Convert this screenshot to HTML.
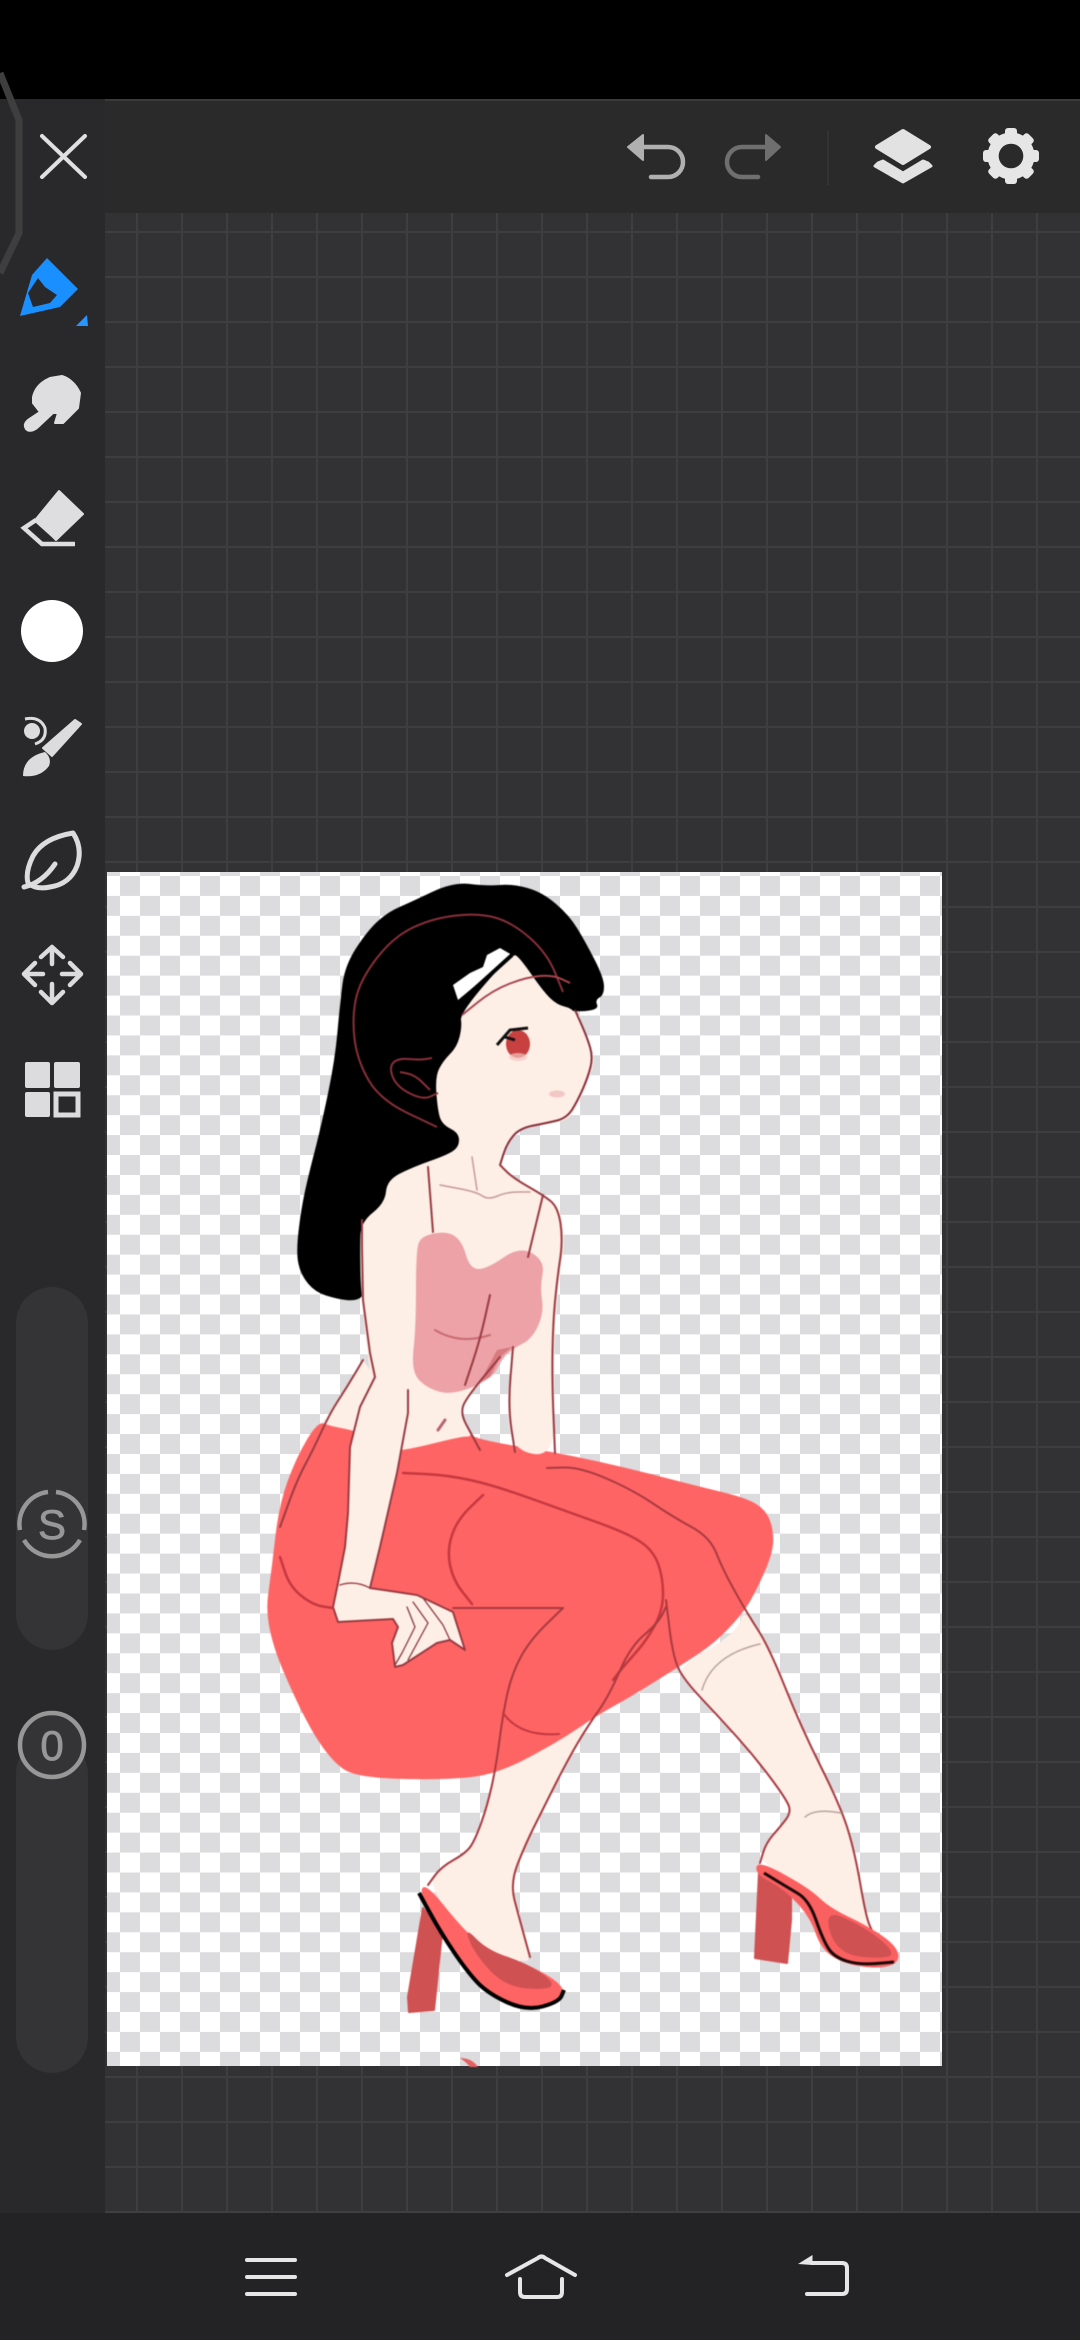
<!DOCTYPE html>
<html><head><meta charset="utf-8"><title>Canvas</title>
<style>html,body{margin:0;padding:0;background:#000;width:1080px;height:2340px;overflow:hidden}svg{display:block}</style>
</head><body>
<svg xmlns="http://www.w3.org/2000/svg" width="1080" height="2340" viewBox="0 0 1080 2340">
<defs>
<pattern id="grid" patternUnits="userSpaceOnUse" x="136" y="231" width="45" height="45"><rect width="45" height="45" fill="#323234"/><rect width="2" height="45" fill="#3e3e40"/><rect width="45" height="2" fill="#3e3e40"/></pattern>
<pattern id="chk" patternUnits="userSpaceOnUse" x="120" y="876" width="40" height="39.86"><rect width="40" height="39.86" fill="#fff"/><rect width="20" height="19.93" fill="#dcdcde"/><rect x="20" y="19.93" width="20" height="19.93" fill="#dcdcde"/></pattern>
</defs>
<rect width="1080" height="2340" fill="#000"/>
<rect x="105" y="213" width="975" height="2000" fill="url(#grid)"/>
<rect x="0" y="99" width="1080" height="114" fill="#2a2a2b"/>
<rect x="0" y="99" width="1080" height="2" fill="#3a3a3b"/>
<rect x="0" y="99" width="105" height="2114" fill="#29292b"/>
<rect x="0" y="2213" width="1080" height="127" fill="#232325"/>
<rect x="105" y="2211" width="975" height="2" fill="#3f3f41"/>
<path d="M0 73L19 120V233L0 273" fill="none" stroke="#3e3e3f" stroke-width="7"/>

<!-- paper -->
<rect x="107" y="872" width="835" height="1194" fill="url(#chk)"/>
<g style="filter:blur(.5px)">
<!-- legs -->
<path class="sm" d="M496 1767L487 1807 475 1840 466 1853 441 1867 428 1885 462 1928 487 1950 526 1963 530 1957 519 1917 510 1883 526 1843 541 1813 566 1763 594 1713 540 1700Z" fill="#fdeee6"/>
<path class="sm" d="M678 1667L737 1633 744 1607 769 1647 801 1727 841 1807 855 1853 866 1917 873 1933 830 1910 809 1890 784 1873 760 1862 766 1843 791 1813 787 1800 755 1757 719 1717 684 1680Z" fill="#fdeee6"/>
<!-- hair -->
<path class="sm" d="M296 1253L301 1210 308 1177 321 1127 335 1060 340 1003 345 965 368 930 388 912 411 902 453 882 487 886 513 884 542 892 569 915 585 941 604 978 604 995 595 1000 599 1009 580 1012 557 1009 543 1000 500 1100 470 1150 400 1210 365 1295 355 1301 337 1299 315 1292 301 1275Z" fill="#000"/>
<!-- back arm -->
<path d="M363 1360L347 1387 330 1413 318 1427 352 1440 375 1377Z" fill="#fdeee6"/>
<!-- skirt -->
<path class="sm" d="M318 1421L330 1426 352 1430 407 1447 463 1431 480 1440 547 1451 597 1461 647 1473 697 1486 747 1498 767 1511 774 1533 772 1555 757 1589 744 1612 715 1643 680 1666 632 1696 596 1716 561 1740 500 1773 451 1780 358 1778 332 1762 303 1717 264 1626 272 1566 279 1505 296 1458Z" fill="#ff6464"/>
<!-- head + torso -->
<path class="sm" d="M460 1013L512 953 520 958 543 991 557 1005 575 1009 587 1037 595 1057 590 1077 580 1100 569 1120 547 1124 520 1128 507 1143 500 1165 513 1178 543 1195 560 1207 565 1240 559 1280 555 1323 554 1380 555 1457 513 1451 506 1407 513 1347 500 1357 467 1397 458 1413 473 1437 463 1436 407 1450 380 1452 361 1300 360 1247 361 1222 385 1203 387 1180 413 1167 447 1155 459 1147 459 1133 443 1125 438 1113 435 1077 443 1061 457 1047 462 1027Z" fill="#fdeee6"/>
<!-- arm + hand -->
<path d="M363 1290L370 1353 375 1377 360 1407 350 1447 348 1513 345 1547 338 1583 333 1607 338 1622 393 1619 398 1627 392 1643 395 1667 403 1665 437 1643 450 1640 465 1650 453 1612 417 1595 370 1588 380 1547 397 1473 408 1413 415 1300Z" fill="#fdeee6"/>
<!-- top -->
<path class="sm" d="M421 1236L447 1231 462 1241 470 1269 487 1269 520 1246 545 1261 540 1287 544 1313 532 1339 512 1349 502 1359 492 1379 453 1395 428 1389 411 1372 416 1327 416 1251Z" fill="#eca2a6"/>
<path d="M512 1347L500 1357 490 1377 480 1382 497 1350Z" fill="#d87a80"/>
<!-- bow and hair line -->
<path d="M453 985L470 973 483 967 487 955 500 948 512 955 458 1000Z" fill="#fff"/>
<path d="M459 1003L512 955" stroke="#000" stroke-width="4" fill="none"/>
<!-- red lines on hair -->
<g fill="none" stroke="#8a2f3a" stroke-width="2" stroke-linejoin="round">
<path class="sm" d="M563 992L547 953 513 923 480 913 433 918 393 937 360 980 352 1017 357 1060 380 1100 437 1127"/>
<path class="sm" d="M432 1058L420 1060 397 1058 389 1068 397 1087 423 1100 438 1093"/>
<path class="sm" d="M400 1072L415 1075 430 1090"/>
<path class="sm" d="M462 1015L493 990 527 977 553 975 570 983" stroke="#a8454e"/>
<path class="sm" d="M575 1010L587 1037 593 1057 588 1077 578 1100 567 1118 547 1123 520 1128 507 1143 500 1165"/>
</g>
<!-- face -->
<ellipse cx="518" cy="1044" rx="12" ry="14" fill="#c8403f"/>
<ellipse cx="518" cy="1057" rx="9" ry="4" fill="#f2c4c0" opacity=".7"/>
<path d="M497 1045L510 1030 528 1028M505 1037L515 1040" stroke="#111" stroke-width="3" fill="none"/>
<ellipse cx="557" cy="1094" rx="8" ry="3.5" fill="#f3c7c4"/>
<!-- body lines -->
<g fill="none" stroke="#9a3b42" stroke-width="2" stroke-linejoin="round" stroke-linecap="round">
<path d="M428 1167L433 1232M543 1195L528 1257"/>
<path class="sm" d="M440 1185L477 1192 488 1200 507 1192 530 1192" stroke="#c79a96" stroke-width="1.5"/>
<path d="M472 1157L477 1190" stroke="#c79a96" stroke-width="1.5"/>
<path class="sm" d="M500 1165L513 1178 543 1195 558 1207 563 1240 557 1280 553 1323 552 1380 555 1453"/>
<path class="sm" d="M513 1347L508 1407 515 1452"/>
<path d="M362 1220L362 1247 363 1300 370 1353 375 1377 360 1407 350 1447 348 1513 345 1547 338 1583 333 1607 338 1622 393 1619 398 1627 392 1643 395 1667 403 1665 437 1643 450 1640 465 1650 453 1612 417 1595 370 1588 380 1547 397 1473 408 1413 408 1390"/>
<path class="sm" d="M363 1360L347 1387 330 1413 313 1450 297 1480 280 1527"/>
<path class="sm" d="M500 1357L467 1397 460 1413 473 1437 480 1450"/>
<path d="M435 1330Q460 1345 490 1335" stroke="#c96a72"/>
<path class="sm" d="M490 1295L480 1340 465 1385"/>
<path class="sm" d="M403 1473L447 1475 493 1485 563 1510 627 1533 653 1550 663 1577 663 1610 647 1640 623 1667 613 1680" stroke="#c4383f" stroke-width="2.5"/>
<path d="M453 1608L563 1608" stroke="#a83a40"/>
<path class="sm" d="M563 1608L530 1640 512 1673 503 1713 496 1767 487 1807 475 1840 466 1853 441 1867 428 1885" stroke="#a83a40"/>
<path class="sm" d="M666 1607L658 1623 630 1647 609 1696 587 1727 566 1763 541 1813 526 1843 510 1883 519 1917 530 1957" stroke="#a83a40"/>
<path class="sm" d="M483 1495L457 1520 447 1550 453 1580 472 1604" stroke="#c4383f" stroke-width="2.5"/>
<path class="sm" d="M280 1557L290 1587 313 1605 333 1608" stroke="#c4383f" stroke-width="2.5"/>
<path class="sm" d="M547 1468L580 1467 633 1490 673 1517 710 1537 723 1570 747 1613 769 1647 801 1727 841 1807 855 1853 866 1917 873 1933" stroke="#a83a40"/>
<path class="sm" d="M666 1600L673 1657 684 1680 719 1717 755 1757 787 1800 791 1813 780 1827 766 1843 760 1863" stroke="#a83a40"/>
<path d="M503 1713Q520 1737 559 1734" stroke="#c4383f"/>
<path d="M702 1690Q712 1655 760 1644M805 1817Q815 1808 841 1813" stroke="#b9a49c" stroke-width="1.5"/>
<path d="M407 1607L415 1627 402 1653 395 1665M413 1602L428 1623 408 1660M423 1598L443 1625 450 1640" stroke="#8a3a40" stroke-width="1.3"/>
<path d="M340 1585Q355 1580 370 1588" stroke-width="1.4"/>
<path d="M438 1430L445 1420" stroke-width="3" stroke="#b9656b"/>
</g>
<!-- shoes -->
<path d="M423 1908L442 1933 434 2010 409 2012 408 1997Z" fill="#cf5152" stroke="#cf5152" stroke-width="2" stroke-linejoin="round"/>
<path class="sm" d="M426 1883L462 1928 487 1950 526 1963 564 1985 562 2000 526 2010 487 1992 462 1965 441 1935 419 1893Z" fill="#ff6464"/>
<path class="sm" d="M464 1926L487 1950 526 1963 553 1981 550 1990 505 1987 474 1953Z" fill="#cf5152"/>
<path class="sm" d="M419 1893L441 1933 466 1970 487 1993 526 2011 559 2002 564 1990" fill="none" stroke="#000" stroke-width="4" stroke-linejoin="round"/>
<path d="M759 1872L791 1893 791 1920 787 1963 755 1958Z" fill="#cf5152" stroke="#cf5152" stroke-width="2" stroke-linejoin="round"/>
<path class="sm" d="M758 1860L809 1888 830 1908 866 1925 896 1945 900 1962 880 1969 844 1964 821 1949 810 1917 784 1889 755 1874Z" fill="#fb6060"/>
<path class="sm" d="M823 1908L866 1928 893 1950 889 1959 837 1955Z" fill="#cf5152"/>
<path class="sm" d="M764 1873L787 1887 809 1900 823 1940 834 1957 859 1965 894 1962" fill="none" stroke="#1a0a0a" stroke-width="3" stroke-linejoin="round"/>
<path d="M460 2058Q472 2058 478 2067L470 2067Q466 2062 460 2058Z" fill="#e46060"/>
</g>

<!-- X -->
<path d="M42 136L85 177M85 136L42 177" stroke="#e0e0e0" stroke-width="4" stroke-linecap="round"/>
<!-- undo redo -->
<path d="M628 147L643 135V160Z" fill="#b0b0b0" stroke="#b0b0b0" stroke-width="2" stroke-linejoin="round"/>
<path d="M643 147H668A15 15 0 0 1 668 177H651" fill="none" stroke="#b0b0b0" stroke-width="4.5" stroke-linecap="round"/>
<path d="M780 147L766 135V160Z" fill="#6f6f6f" stroke="#6f6f6f" stroke-width="2" stroke-linejoin="round"/>
<path d="M766 147H742A15 15 0 0 0 742 177H758" fill="none" stroke="#6f6f6f" stroke-width="4.5" stroke-linecap="round"/>
<rect x="827" y="130" width="2" height="55" fill="#333335"/>
<!-- layers -->
<path d="M903 131L929 147 903 163 877 147Z" fill="#e2e2e2" stroke="#e2e2e2" stroke-width="4" stroke-linejoin="round"/>
<path d="M878 163L883 161 903 173 923 161 928 163 931 166 903 182 875 166Z" fill="#e2e2e2" stroke="#e2e2e2" stroke-width="3" stroke-linejoin="round"/>
<!-- gear -->
<g transform="translate(1011 156)" fill="#e6e6e6">
<circle r="23.5"/>
<rect x="-6" y="-28" width="12" height="10" rx="3"/>
<rect x="-6" y="-28" width="12" height="10" rx="3" transform="rotate(45)"/>
<rect x="-6" y="-28" width="12" height="10" rx="3" transform="rotate(90)"/>
<rect x="-6" y="-28" width="12" height="10" rx="3" transform="rotate(135)"/>
<rect x="-6" y="-28" width="12" height="10" rx="3" transform="rotate(180)"/>
<rect x="-6" y="-28" width="12" height="10" rx="3" transform="rotate(225)"/>
<rect x="-6" y="-28" width="12" height="10" rx="3" transform="rotate(270)"/>
<rect x="-6" y="-28" width="12" height="10" rx="3" transform="rotate(315)"/>
<circle r="12.3" fill="#2a2a2b"/>
</g>

<!-- pen -->
<path fill-rule="evenodd" d="M47 258L78 289 60 307 20 316 32 275ZM38 278L45 287 57 295 50 303 33 307 28 293Z" fill="#1a8fff"/>
<path d="M76 326L87 315 88 326Z" fill="#2a95ff"/>
<!-- smudge -->
<path d="M33 397Q36 384 50 378L62 376Q74 380 80 393L78 408 63 423 55 423 58 413 53 413 37 428Q30 433 26 429 23 424 28 420L40 412 33 403Z" fill="#dedee0" stroke="#dedee0" stroke-width="2" stroke-linejoin="round"/>
<!-- eraser -->
<path d="M59 491L83 514 56 540 36 519Z" fill="#dedee0" stroke="#dedee0" stroke-width="2" stroke-linejoin="round"/>
<path d="M36 520L24 528 42 544H75" fill="none" stroke="#dedee0" stroke-width="4.5"/>
<path d="M36 521L55 538" stroke="#dedee0" stroke-width="3"/>
<!-- colour -->
<circle cx="52" cy="631" r="31" fill="#fff"/>
<!-- brush -->
<g fill="#dcdcde">
<circle cx="32" cy="731" r="8"/>
<path d="M25 719Q40 716 45 728 47 740 35 744" fill="none" stroke="#dcdcde" stroke-width="3"/>
<path d="M75 720L81 724 52 756 43 748Z" stroke="#dcdcde" stroke-width="2" stroke-linejoin="round"/>
<path d="M23 776Q23 757 45 752 52 758 49 766 40 778 23 776Z"/>
</g>
<!-- leaf -->
<g fill="none" stroke="#dcdcde" stroke-width="5" stroke-linecap="round" stroke-linejoin="round">
<path d="M73 833Q43 838 33 856 25 872 28 883 36 890 50 887 70 884 77 866 83 848 73 833Z"/>
<path d="M24 887Q42 883 55 864"/>
</g>
<!-- move -->
<path d="M52 948V964M41 957L52 947 63 957M52 984V1002M41 992L52 1003 63 992M24 974H43M35 963L24 974 35 985M62 974H81M70 963L81 974 70 985" fill="none" stroke="#dcdcde" stroke-width="4.5" stroke-linecap="round" stroke-linejoin="round"/>
<!-- grid icon -->
<g fill="#dcdcde">
<rect x="25" y="1062" width="25" height="26" rx="2"/>
<rect x="54" y="1062" width="26" height="26" rx="2"/>
<rect x="25" y="1092" width="25" height="25" rx="2"/>
<rect x="56" y="1094" width="22" height="21" fill="none" stroke="#dcdcde" stroke-width="5"/>
</g>
<!-- sliders -->
<rect x="16" y="1287" width="72" height="363" rx="36" fill="#343436"/>
<rect x="16" y="1738" width="72" height="335" rx="36" fill="#343436"/>
<circle cx="52" cy="1745" r="32" fill="#343436"/>
<g fill="none" stroke="#979797" stroke-width="4.5">
<path d="M56 1492A32.2 32.2 0 0 1 84 1530"/>
<path d="M80 1540A32.2 32.2 0 0 1 24 1540"/>
<path d="M20 1530A32.2 32.2 0 0 1 48 1492"/>
<circle cx="52" cy="1745" r="32"/>
</g>
<text x="52" y="1539" text-anchor="middle" font-family="'Liberation Sans',sans-serif" font-size="42" fill="#979797" stroke="#979797" stroke-width=".8">S</text>
<text x="52" y="1760" text-anchor="middle" font-family="'Liberation Sans',sans-serif" font-size="42" fill="#979797" stroke="#979797" stroke-width=".8">0</text>
<!-- nav -->
<g fill="none" stroke="#e6e6e6" stroke-width="4" stroke-linecap="round" stroke-linejoin="round">
<path d="M247 2260H295M247 2277H295M247 2294H295"/>
<path d="M507 2275L538 2258Q541.5 2255 545 2258L575 2275"/>
<path d="M520 2279V2292Q520 2297 525 2297H557Q562 2297 562 2292V2279"/>
<path d="M812 2263H842Q847 2263 847 2268V2289Q847 2294 842 2294H807"/>
</g>
<path d="M798 2264L812.5 2255V2265Z" fill="#e6e6e6"/>
</svg>
<script>
document.querySelectorAll('path.sm').forEach(function(p){
  var d=p.getAttribute('d'),c=/Z\s*$/i.test(d),n=d.match(/-?\d+(?:\.\d+)?/g).map(Number),a=[],i,o;
  for(i=0;i+1<n.length;i+=2)a.push([n[i],n[i+1]]);
  function m(u,v){return ((u[0]+v[0])/2)+' '+((u[1]+v[1])/2);}
  if(c){
    o='M'+m(a[a.length-1],a[0]);
    for(i=0;i<a.length;i++)o+='Q'+a[i][0]+' '+a[i][1]+' '+m(a[i],a[(i+1)%a.length]);
    o+='Z';
  }else{
    o='M'+a[0][0]+' '+a[0][1]+'L'+m(a[0],a[1]);
    for(i=1;i<a.length-1;i++)o+='Q'+a[i][0]+' '+a[i][1]+' '+m(a[i],a[i+1]);
    o+='L'+a[a.length-1][0]+' '+a[a.length-1][1];
  }
  p.setAttribute('d',o);
});
</script>
</body></html>
